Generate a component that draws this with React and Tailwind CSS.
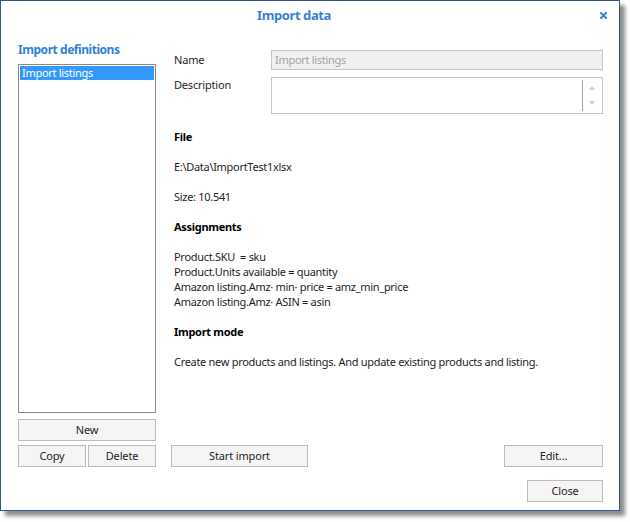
import React from "react";

const font = { fontFamily: '"Noto Sans", "Open Sans", sans-serif' };

function Btn({ className = "", children }) {
  return (
    <div
      className={
        "h-[22px] flex items-center justify-center border border-[#bcbcbc] bg-[#f5f5f5] text-[11px] tracking-[-0.15px] text-[#1e1e1e] " +
        className
      }
    >
      {children}
    </div>
  );
}

export default function App() {
  return (
    <div className="w-[630px] h-[522px] bg-white" style={font}>
      <div className="w-[620px] h-[511px] border border-[#2f5597] bg-white flex flex-col shadow-[5px_5px_4px_rgba(0,0,0,0.45)]">
        {/* title bar */}
        <div className="h-[28px] flex items-center pl-[256px] pr-[12px]">
          <span className="text-[13px] font-bold tracking-[-0.4px] text-[#3a7fd8] leading-none">Import data</span>
          <div className="flex-1" />
          <svg width="7" height="7" viewBox="0 0 7 7">
            <path d="M1 1L6 6M6 1L1 6" stroke="#2b8ae0" strokeWidth="2" strokeLinecap="square" />
          </svg>
        </div>

        {/* body */}
        <div className="h-[438px] flex pl-[17px] pr-[16px] gap-[15px]">
          {/* left column */}
          <div className="w-[138px] flex flex-col">
            <div className="mt-[13px] h-[16px] leading-[16px] text-[12px] font-bold tracking-[-0.45px] text-[#2f7fd6]">
              Import definitions
            </div>
            <div className="mt-[6px] h-[349px] border border-[#8a8a8a] p-px">
              <div className="h-[14px] bg-[#3399ff] text-white text-[11px] tracking-[-0.3px] leading-[14px] pl-[2px]">
                Import listings
              </div>
            </div>
            <Btn className="mt-[6px] w-[138px]">New</Btn>
            <div className="mt-[4px] flex gap-[2px]">
              <Btn className="w-[68px]">Copy</Btn>
              <Btn className="w-[68px]">Delete</Btn>
            </div>
          </div>

          {/* right column */}
          <div className="w-[432px] flex flex-col pt-[21px] text-[11px] text-[#1e1e1e]">
            <div className="flex h-[20px] items-center">
              <div className="w-[100px] pl-[3px] tracking-[-0.2px]">Name</div>
              <div className="w-[332px] h-[20px] border border-[#c4c4c4] bg-[#f0f0f0] text-[#a3a3a3] tracking-[-0.3px] flex items-center pl-[3px]">
                Import listings
              </div>
            </div>
            <div className="flex mt-[7px] h-[37px]">
              <div className="w-[100px] pl-[3px] leading-[16px] tracking-[-0.2px]">Description</div>
              <div className="w-[332px] h-[37px] border border-[#c4c4c4] bg-white flex justify-end py-[1px] pr-[1px]">
                <div className="w-[19px] border-l border-[#a0a0a0] my-[1px] flex flex-col items-center justify-between py-[6px]">
                  <svg width="6" height="4" viewBox="0 0 6 4">
                    <path d="M3 0L6 4H0Z" fill="#cfcfcf" />
                  </svg>
                  <svg width="6" height="4" viewBox="0 0 6 4">
                    <path d="M0 0H6L3 4Z" fill="#cfcfcf" />
                  </svg>
                </div>
              </div>
            </div>

            <div className="mt-[15px] pl-[3px] flex flex-col gap-[15px] leading-[15px] tracking-[-0.3px]">
              <div className="font-bold text-black">File</div>
              <div>E:\Data\ImportTest1xlsx</div>
              <div>Size: 10.541</div>
              <div className="font-bold text-black">Assignments</div>
              <div className="flex flex-col">
                <div>Product.SKU&nbsp; = sku</div>
                <div>Product.Units available = quantity</div>
                <div>Amazon listing.Amz· min· price = amz_min_price</div>
                <div>Amazon listing.Amz· ASIN = asin</div>
              </div>
              <div className="font-bold text-black">Import mode</div>
              <div>Create new products and listings. And update existing products and listing.</div>
            </div>

            <div className="flex-1" />
            <div className="flex justify-between">
              <Btn className="w-[137px]">Start import</Btn>
              <Btn className="w-[99px]">Edit...</Btn>
            </div>
          </div>
        </div>

        {/* bottom */}
        <div className="mt-[13px] flex justify-end pr-[16px]">
          <Btn className="w-[76px]">Close</Btn>
        </div>
      </div>
    </div>
  );
}
